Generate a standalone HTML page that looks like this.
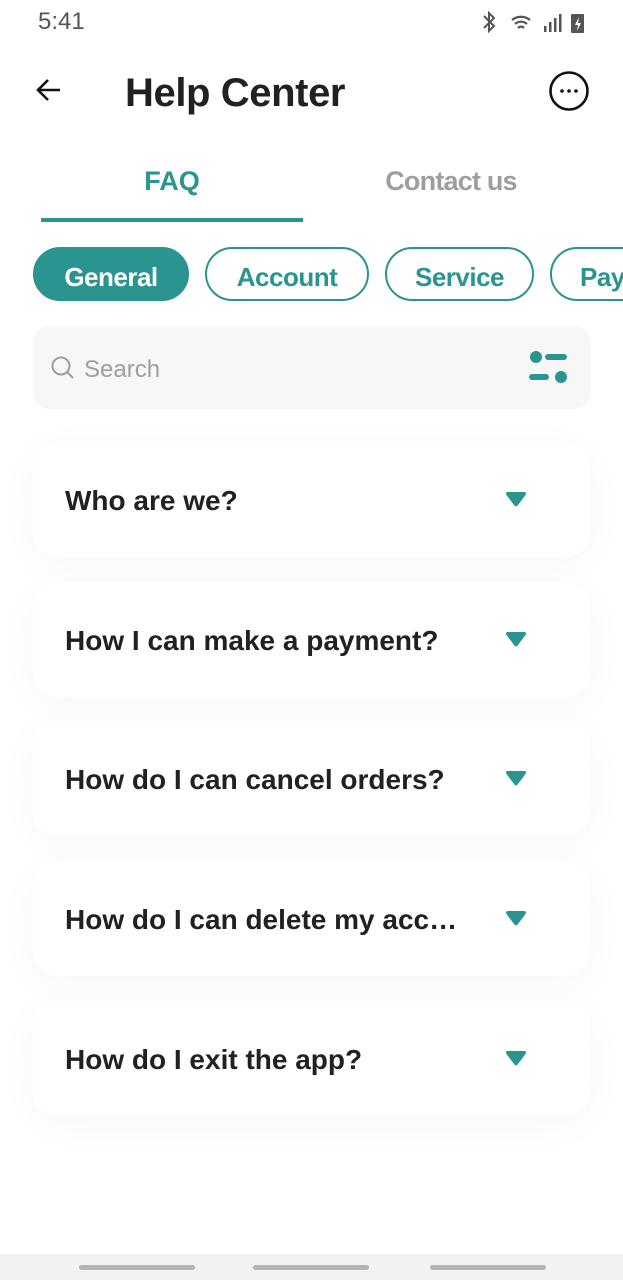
<!DOCTYPE html>
<html><head><meta charset="utf-8"><style>
*{margin:0;padding:0;box-sizing:border-box}
html,body{width:623px;height:1280px;overflow:hidden}
body{background:#fff;font-family:"Liberation Sans",sans-serif;position:relative;color:#212121}
.wrap{position:absolute;left:0;top:0;width:623px;height:1280px;overflow:hidden}
.abs{position:absolute}
.chip{position:absolute;top:247px;height:54px;border:2px solid #2a9490;border-radius:27px;color:#2a9490;font-size:26px;font-weight:bold;display:flex;align-items:center;justify-content:center;letter-spacing:-0.5px;padding-top:6px}
.card{position:absolute;left:33px;width:557px;height:115px;background:#fff;border-radius:24px;box-shadow:0 8px 40px rgba(0,0,0,0.035)}
.card span{position:absolute;left:32px;top:43px;font-size:28px;font-weight:bold;letter-spacing:0;color:#212121}
.card svg{position:absolute;left:472px;top:48px}
.bar{position:absolute;top:1265px;height:5px;width:116px;background:#b5b5b5;border-radius:3px}
</style></head><body><div class="wrap">
<div class="abs" style="left:38px;top:8px;font-size:24px;color:#555">5:41</div>
<svg class="abs" style="left:480px;top:10px" width="108" height="24" viewBox="0 0 108 24">
<path d="M4 6l10 10-5 5V3l5 5-10 10" fill="none" stroke="#555" stroke-width="2"/>
<path d="M32 10a14 14 0 0 1 18 0M35 14a9 9 0 0 1 12 0M38 18a4 4 0 0 1 6 0" fill="none" stroke="#555" stroke-width="2.2"/>
<rect x="64" y="16" width="2.5" height="6" fill="#555"/><rect x="69" y="12" width="2.5" height="10" fill="#555"/><rect x="74" y="8" width="2.5" height="14" fill="#555"/><rect x="79" y="4" width="2.5" height="18" fill="#555"/>
<rect x="91" y="4" width="13" height="19" rx="1" fill="#555"/><path d="M99 7l-4 8h3l-1 6 4-8h-3z" fill="#fff"/>
</svg>
<svg class="abs" style="left:34px;top:76px" width="30" height="28" viewBox="0 0 30 28"><path d="M26 14H4M14 4L4 14l10 10" fill="none" stroke="#111" stroke-width="2.6"/></svg>
<div class="abs" style="left:125px;top:71px;font-size:40px;font-weight:bold;color:#212121;letter-spacing:-0.4px">Help Center</div>
<svg class="abs" style="left:548px;top:70px" width="42" height="42" viewBox="0 0 42 42"><circle cx="21" cy="21" r="18.5" fill="none" stroke="#111" stroke-width="2.6"/><circle cx="14" cy="21" r="1.8" fill="#111"/><circle cx="21" cy="21" r="1.8" fill="#111"/><circle cx="28" cy="21" r="1.8" fill="#111"/></svg>
<div class="abs" style="left:41px;width:262px;top:166px;text-align:center;font-size:27px;font-weight:bold;color:#2a9490">FAQ</div>
<div class="abs" style="left:320px;width:262px;top:166px;text-align:center;font-size:27px;font-weight:bold;color:#9e9e9e;letter-spacing:-0.8px">Contact us</div>
<div class="abs" style="left:41px;top:218px;width:262px;height:4px;background:#2a9490"></div>
<div class="chip" style="left:33px;width:156px;background:#2a9490;color:#fff">General</div>
<div class="chip" style="left:205px;width:164px">Account</div>
<div class="chip" style="left:385px;width:149px">Service</div>
<div class="chip" style="left:550px;width:140px;justify-content:flex-start;padding-left:28px">Payment</div>
<div class="abs" style="left:33px;top:326px;width:557px;height:83px;background:#f7f7f7;border-radius:16px"></div>
<svg class="abs" style="left:50px;top:355px" width="26" height="26" viewBox="0 0 26 26"><circle cx="11" cy="11" r="8.5" fill="none" stroke="#9e9e9e" stroke-width="2"/><path d="M17 17l6 6" stroke="#9e9e9e" stroke-width="2"/></svg>
<div class="abs" style="left:84px;top:356px;font-size:24px;color:#9e9e9e">Search</div>
<svg class="abs" style="left:528px;top:350px" width="40" height="36" viewBox="0 0 40 36"><circle cx="8" cy="7" r="6" fill="#2a9490"/><rect x="17" y="4" width="22" height="6" rx="3" fill="#2a9490"/><rect x="1" y="24" width="20" height="6" rx="3" fill="#2a9490"/><circle cx="33" cy="27" r="6" fill="#2a9490"/></svg>
<div class="card" style="top:442px"><span>Who are we?</span><svg width="22" height="18" viewBox="0 0 22 18"><path d="M3 2h16q3 0 1.5 3L13 15q-2 3-4 0L1.5 5Q0 2 3 2z" fill="#2a9490"/></svg></div>
<div class="card" style="top:582px"><span>How I can make a payment?</span><svg width="22" height="18" viewBox="0 0 22 18"><path d="M3 2h16q3 0 1.5 3L13 15q-2 3-4 0L1.5 5Q0 2 3 2z" fill="#2a9490"/></svg></div>
<div class="card" style="top:721px"><span>How do I can cancel orders?</span><svg width="22" height="18" viewBox="0 0 22 18"><path d="M3 2h16q3 0 1.5 3L13 15q-2 3-4 0L1.5 5Q0 2 3 2z" fill="#2a9490"/></svg></div>
<div class="card" style="top:861px"><span>How do I can delete my acc…</span><svg width="22" height="18" viewBox="0 0 22 18"><path d="M3 2h16q3 0 1.5 3L13 15q-2 3-4 0L1.5 5Q0 2 3 2z" fill="#2a9490"/></svg></div>
<div class="card" style="top:1001px"><span>How do I exit the app?</span><svg width="22" height="18" viewBox="0 0 22 18"><path d="M3 2h16q3 0 1.5 3L13 15q-2 3-4 0L1.5 5Q0 2 3 2z" fill="#2a9490"/></svg></div>
<div class="abs" style="left:0;top:1254px;width:623px;height:26px;background:#f2f2f2"></div>
<div class="bar" style="left:79px"></div><div class="bar" style="left:253px"></div><div class="bar" style="left:430px"></div>
</div></body></html>
